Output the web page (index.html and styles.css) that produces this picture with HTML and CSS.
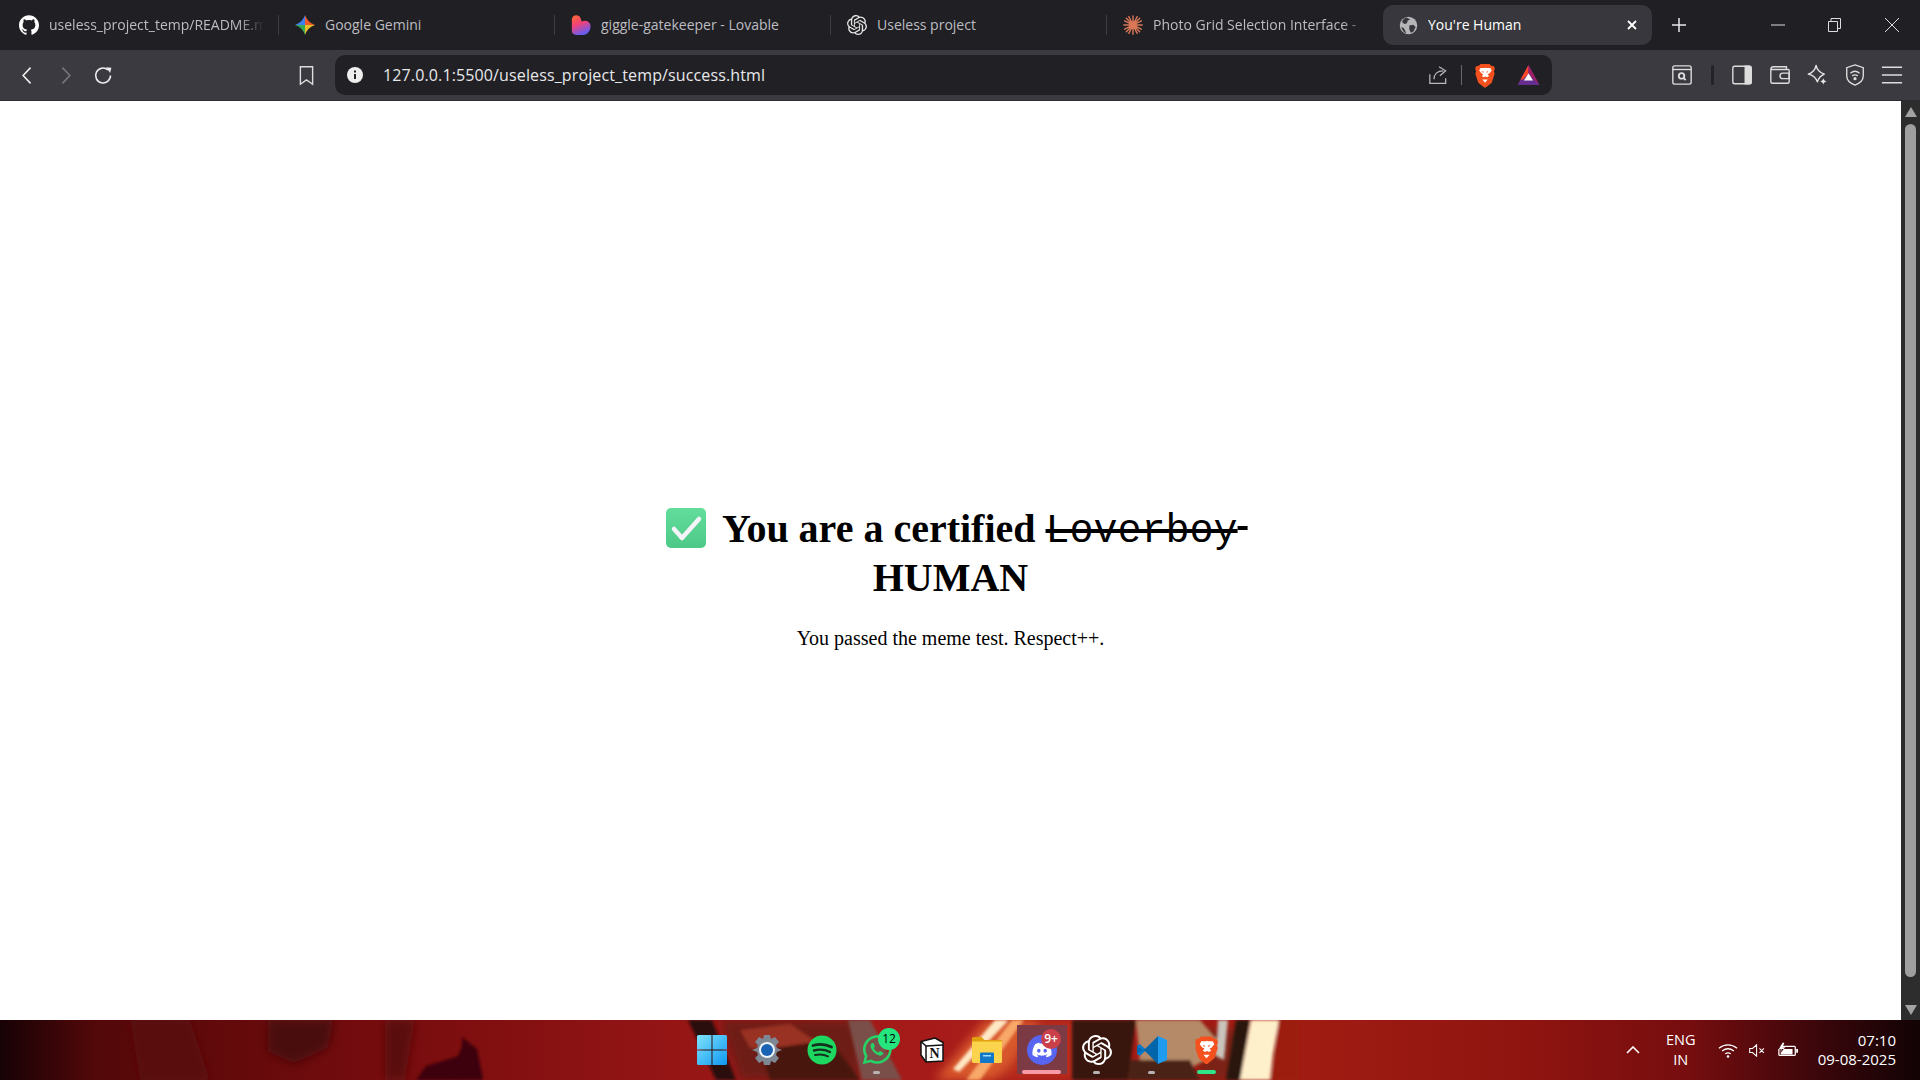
FILE: index.html
```html
<!DOCTYPE html>
<html lang="en">
<head>
  <meta charset="UTF-8">
  <meta name="viewport" content="width=device-width, initial-scale=1.0">
  <title>You're Human</title>
  <link rel="stylesheet" href="styles.css">
</head>
<body>

<svg class="svg-defs" aria-hidden="true">
  <defs>
    <linearGradient id="winBlue" x1="0" y1="0" x2="1" y2="1">
      <stop offset="0" stop-color="#7fe3fb"/>
      <stop offset="1" stop-color="#0f97f2"/>
    </linearGradient>
    <linearGradient id="heartFill" x1="0" y1="0" x2="0.4" y2="1">
      <stop offset="0" stop-color="#fb6a2c"/>
      <stop offset="0.5" stop-color="#f2427a"/>
      <stop offset="1" stop-color="#6a5cf0"/>
    </linearGradient>
    <linearGradient id="checkFill" x1="0" y1="0" x2="0" y2="1">
      <stop offset="0" stop-color="#63dd9b"/>
      <stop offset="1" stop-color="#4fc987"/>
    </linearGradient>
    <symbol id="braveLion" viewBox="0 0 24 28">
      <path fill="#f4511e" d="M7 1h10l2 2 3 .5 1 3-1 3 .8 2.500-3.300 10L13 27.500h-2l-6.500-5.500-3.300-10L2 9.500 1 6.500 2 3.500 5 3z"/>
      <path fill="#fff" d="M12 5c2 1 4 .5 6 .5l1.500 3-2.500 3-2 1 1.500 2-2 1.500-2-1-2 1-2-1.500 1.500-2-2-1-2.500-3 1.500-3c2 0 4 .5 6-.5z"/>
      <path fill="#fff" d="M9 18.500h6L12 22z"/>
      <path fill="#f4511e" d="M8 9l2.500.8-.5 1.500zM16 9l-2.500.8.5 1.500z"/>
    </symbol>
    <symbol id="openaiKnot" viewBox="0 0 24 24">
      <path d="M22.2819 9.8211a5.9847 5.9847 0 0 0-.5157-4.9108 6.0462 6.0462 0 0 0-6.5098-2.9A6.0651 6.0651 0 0 0 4.9807 4.1818a5.9847 5.9847 0 0 0-3.9977 2.9 6.0462 6.0462 0 0 0 .7427 7.0966 5.98 5.98 0 0 0 .511 4.9107 6.051 6.051 0 0 0 6.5146 2.9001A5.9847 5.9847 0 0 0 13.2599 24a6.0557 6.0557 0 0 0 5.7718-4.2058 5.9894 5.9894 0 0 0 3.9977-2.9001 6.0557 6.0557 0 0 0-.7475-7.0729zm-9.022 12.6081a4.4755 4.4755 0 0 1-2.8764-1.0408l.1419-.0804 4.7783-2.7582a.7948.7948 0 0 0 .3927-.6813v-6.7369l2.02 1.1686a.071.071 0 0 1 .038.052v5.5826a4.504 4.504 0 0 1-4.4945 4.4944zm-9.6607-4.1254a4.4708 4.4708 0 0 1-.5346-3.0137l.142.0852 4.783 2.7582a.7712.7712 0 0 0 .7806 0l5.8428-3.3685v2.3324a.0804.0804 0 0 1-.0332.0615L9.74 19.9502a4.4992 4.4992 0 0 1-6.1408-1.6464zM2.3408 7.8956a4.485 4.485 0 0 1 2.3655-1.9728V11.6a.7664.7664 0 0 0 .3879.6765l5.8144 3.3543-2.0201 1.1685a.0757.0757 0 0 1-.071 0l-4.8303-2.7865A4.504 4.504 0 0 1 2.3408 7.872zm16.5963 3.8558L13.1038 8.364 15.1192 7.2a.0757.0757 0 0 1 .071 0l4.8303 2.7913a4.4944 4.4944 0 0 1-.6765 8.1042v-5.6772a.79.79 0 0 0-.407-.667zm2.0107-3.0231l-.142-.0852-4.7735-2.7818a.7759.7759 0 0 0-.7854 0L9.409 9.2297V6.8974a.0662.0662 0 0 1 .0284-.0615l4.8303-2.7866a4.4992 4.4992 0 0 1 6.6802 4.66zM8.3065 12.863l-2.02-1.1638a.0804.0804 0 0 1-.038-.0567V6.0742a4.4992 4.4992 0 0 1 7.3757-3.4537l-.142.0805L8.704 5.459a.7948.7948 0 0 0-.3927.6813zm1.0976-2.3654l2.602-1.4998 2.6069 1.4998v2.9994l-2.5974 1.4997-2.6067-1.4997Z"/>
    </symbol>
    <filter id="soft"><feGaussianBlur stdDeviation="5"/></filter>
    <filter id="softer"><feGaussianBlur stdDeviation="1.5"/></filter>
  </defs>
</svg>

<div class="tabstrip">
  <div class="tab">
    <svg class="tab-icon" viewBox="0 0 24 24" fill="#fff"><path d="M12 .297c-6.630 0-12 5.373-12 12 0 5.303 3.438 9.800 8.205 11.385.6.113.82-.258.82-.577 0-.285-.01-1.040-.015-2.040-3.338.724-4.042-1.610-4.042-1.610C4.422 18.070 3.633 17.700 3.633 17.700c-1.087-.744.084-.729.084-.729 1.205.084 1.838 1.236 1.838 1.236 1.070 1.835 2.809 1.305 3.495.998.108-.776.417-1.305.76-1.605-2.665-.3-5.466-1.332-5.466-5.930 0-1.310.465-2.380 1.235-3.220-.135-.303-.54-1.523.105-3.176 0 0 1.005-.322 3.300 1.230.96-.267 1.980-.399 3-.405 1.020.006 2.040.138 3 .405 2.280-1.552 3.285-1.230 3.285-1.230.645 1.653.24 2.873.12 3.176.765.84 1.230 1.910 1.230 3.220 0 4.610-2.805 5.625-5.475 5.920.42.36.81 1.096.81 2.220 0 1.606-.015 2.896-.03 3.286 0 .315.21.69.825.57C20.565 22.092 24 17.592 24 12.297c0-6.627-5.373-12-12-12"/></svg>
    <span class="tab-title tab-fade">useless_project_temp/README.md</span>
  </div>
  <div class="tab">
    <svg class="tab-icon" viewBox="0 0 24 24">
      <path fill="#ee5a2a" d="M12 12V0Q15 9 24 12z"/>
      <path fill="#e6c02a" d="M12 12h12Q15 15 12 24z"/>
      <path fill="#34a853" d="M12 12v12Q9 15 0 12z"/>
      <path fill="#3f7ff0" d="M12 12H0Q9 9 12 0z"/>
    </svg>
    <span class="tab-title">Google Gemini</span>
  </div>
  <div class="tab">
    <svg class="tab-icon" viewBox="0 0 24 24"><path fill="url(#heartFill)" d="M1 5.500C1 -.5 10-1.500 11.500 4l1.500 4c3.500-2.500 10.500-.5 10.500 5.500 0 5.500-4 10.500-9 10.500H6.500C3 24 1 22 1 19z"/></svg>
    <span class="tab-title">giggle-gatekeeper - Lovable</span>
  </div>
  <div class="tab">
    <svg class="tab-icon" fill="#e6e6e6"><use href="#openaiKnot"/></svg>
    <span class="tab-title">Useless project</span>
  </div>
  <div class="tab tab-last">
    <svg class="tab-icon" viewBox="0 0 24 24" stroke="#d97757" stroke-width="1.700" stroke-linecap="round">
      <path d="M12 1v22M1 12h22M4 4l16 16M20 4L4 20M7 2l10 20M17 2L7 22M2 7l20 10M22 7L2 17"/>
      <circle cx="12" cy="12" r="4.500" fill="#d97757" stroke="none"/>
    </svg>
    <span class="tab-title tab-fade">Photo Grid Selection Interface -</span>
  </div>
  <div class="tab-active">
    <svg class="tab-icon tab-icon-globe" viewBox="0 0 24 24">
      <circle cx="12" cy="12" r="11" fill="#b5b5b8"/>
      <path fill="#37373d" d="M9 2c-2 1-5 3-5 6l3 2 3-1 1-3 3-2zM13 12l5-1 3 3-3 6-3 1-2-4zM3 14l3 1 2 4 1 3c-3-1-5-4-6-8z"/>
    </svg>
    <span class="tab-title tab-title-active">You're Human</span>
    <svg class="tab-close" viewBox="0 0 10 10" stroke="#fff" stroke-width="1.800"><path d="M1 1l8 8M9 1l-8 8"/></svg>
  </div>
  <svg class="new-tab" viewBox="0 0 14 14" stroke="#e8e8e8" stroke-width="1.500"><path d="M7 0v14M0 7h14"/></svg>
  <div class="win-controls">
    <div class="win-btn"><svg class="win-icon" viewBox="0 0 14 14" stroke="#ddd"><path d="M0 7h14"/></svg></div>
    <div class="win-btn"><svg class="win-icon" viewBox="0 0 14 14" fill="none" stroke="#ddd"><path d="M.5 3.500h9v10h-9zM3 3.500v-3h9.500v10h-3"/></svg></div>
    <div class="win-btn"><svg class="win-icon" viewBox="0 0 14 14" stroke="#ddd"><path d="M0 0l14 14M14 0L0 14"/></svg></div>
  </div>
</div>

<div class="toolbar">
  <div class="tool-btn"><svg class="tool-icon" viewBox="0 0 24 24" fill="none" stroke="#eee" stroke-width="1.800"><path d="M15.500 3L7 12l8.500 9"/></svg></div>
  <div class="tool-btn"><svg class="tool-icon" viewBox="0 0 24 24" fill="none" stroke="#77777c" stroke-width="1.800"><path d="M8.500 3L17 12l-8.500 9"/></svg></div>
  <div class="tool-btn"><svg class="tool-icon" viewBox="0 0 24 24" fill="none" stroke="#eee" stroke-width="1.800"><path d="M20 12a8.500 8.500 0 1 1-3-6.500"/><path fill="#eee" stroke="none" d="M15 2.500l6 .5-1.500 6z"/></svg></div>
  <div class="tool-btn tool-bookmark"><svg class="tool-icon" viewBox="0 0 24 24" fill="none" stroke="#ddd" stroke-width="1.600"><path d="M5 2h14v20l-7-5-7 5z"/></svg></div>

  <div class="urlbar">
    <svg class="url-info" viewBox="0 0 16 16"><circle cx="8" cy="8" r="8" fill="#eee"/><path stroke="#202025" stroke-width="2" d="M8 7v5M8 3.500v2"/></svg>
    <span class="url-text">127.0.0.1:5500/useless_project_temp/success.html</span>
    <svg class="url-share" viewBox="0 0 24 24" fill="none" stroke="#b9b9bd" stroke-width="1.500"><path d="M1 11v11h19v-6M6 17c0-6 4-10 11-10M12 2l8 5-7 6"/></svg>
    <span class="url-sep"></span>
    <svg class="url-brave"><use href="#braveLion"/></svg>
    <svg class="url-bat" viewBox="0 0 24 22">
      <path fill="#662d91" d="M12 0l12 22H0z"/>
      <path fill="#ff4724" d="M12 0v9L6 16H3.500L0 22z"/>
      <path fill="#9e1f63" d="M12 0l12 22-6-6-6-7z"/>
      <path fill="#fff" d="M12 9l5 8H7z"/>
    </svg>
  </div>

  <div class="tool-right">
    <div class="tool-btn tool-narrow"><svg class="tool-icon" viewBox="0 0 24 24" fill="none" stroke="#ddd" stroke-width="1.500"><rect x="2" y="2" width="20" height="20" rx="2"/><path d="M2 6h20"/><circle cx="11.500" cy="13" r="3" stroke-width="2"/><path d="M14 15.500l2 2" stroke-width="2"/></svg></div>
    <span class="tool-sep"></span>
    <div class="tool-btn tool-narrow"><svg class="tool-icon" viewBox="0 0 24 24" fill="none" stroke="#ddd" stroke-width="1.500"><rect x="2" y="2.500" width="20" height="19" rx="2"/><path fill="#ddd" d="M15.500 2.500H20a2 2 0 0 1 2 2v15a2 2 0 0 1-2 2h-4.500z"/></svg></div>
    <div class="tool-btn tool-narrow"><svg class="tool-icon" viewBox="0 0 24 24" fill="none" stroke="#ddd" stroke-width="1.500"><path d="M2 6a3 3 0 0 1 3-3h14v3M2 6v13a2 2 0 0 0 2 2h16a2 2 0 0 0 2-2V7a1 1 0 0 0-1-1H2z"/><path d="M22 10h-7a2 2 0 0 0 0 6h7z"/></svg></div>
    <div class="tool-btn tool-narrow"><svg class="tool-icon" viewBox="0 0 24 24" fill="none" stroke="#e6e6e6" stroke-width="1.500"><path d="M11 1.500c1 5 4 8 9 9.500-4 1.500-6 3.500-7.500 8.500-2-5.500-5-7.500-10-8.500 5-1.500 7.500-4.500 8.500-9.500z" stroke-linejoin="round"/><path fill="#e6e6e6" stroke="none" d="M19 15.500c.3 1.800 1.200 2.700 3.500 3.500-2.300.6-3.200 1.500-3.500 3.500-.5-2-1.500-3-3.500-3.500 2-.8 3-1.700 3.500-3.500z"/></svg></div>
    <div class="tool-btn tool-narrow"><svg class="tool-icon" viewBox="0 0 24 24" fill="none" stroke="#ddd" stroke-width="1.500"><path d="M12 1l9 3v9c0 4-4 8-9 10-5-2-9-6-9-10V4z"/><path d="M7 10c3-2.500 7-2.500 10 0M9 13c2-1.500 4-1.500 6 0"/><circle cx="12" cy="16" r="1" fill="#ddd"/></svg></div>
    <div class="tool-btn tool-narrow"><svg class="tool-icon" viewBox="0 0 24 24" stroke="#ddd" stroke-width="1.800"><path d="M1 3.500h22M1 12h22M1 20.500h22"/></svg></div>
  </div>
</div>

<div class="viewport">
  <main class="page">
    <h1 class="title"><svg class="check-emoji" viewBox="0 0 40 40"><rect width="40" height="40" rx="5" fill="url(#checkFill)"/><path d="M8 21l8 9L33 11" fill="none" stroke="#f6f4f8" stroke-width="4.500" stroke-linecap="round" stroke-linejoin="round"/></svg> You are a certified <s class="struck">Loverboy<span class="struck-tail">&nbsp;</span></s><br>HUMAN</h1>
    <p class="subtitle">You passed the meme test. Respect++.</p>
  </main>
  <div class="scrollbar">
    <svg class="scroll-arrow" viewBox="0 0 12 10"><path fill="#a3a3a3" d="M6 0l6 10H0z"/></svg>
    <div class="scroll-thumb"></div>
    <svg class="scroll-arrow" viewBox="0 0 12 10"><path fill="#a3a3a3" d="M6 10L0 0h12z"/></svg>
  </div>
</div>

<footer class="taskbar">
  <svg class="wallpaper" viewBox="0 0 1920 60" preserveAspectRatio="none">
    <defs>
      <linearGradient id="wallBase">
        <stop offset="0" stop-color="#170205"/>
        <stop offset="0.05" stop-color="#530809"/>
        <stop offset="0.2" stop-color="#760c0e"/>
        <stop offset="0.35" stop-color="#951515"/>
        <stop offset="0.5" stop-color="#a81c1a"/>
        <stop offset="0.68" stop-color="#a01c12"/>
        <stop offset="0.8" stop-color="#8e1410"/>
        <stop offset="0.88" stop-color="#760d0f"/>
        <stop offset="0.95" stop-color="#38060a"/>
        <stop offset="1" stop-color="#120305"/>
      </linearGradient>
    </defs>
    <rect width="1920" height="60" fill="url(#wallBase)"/>
    <g filter="url(#soft)">
      <path fill="#4a070a" d="M268 0h66l-6 28-34 16-26-12z"/>
      <path fill="#5a090b" d="M130 0h60l20 60h-70zM385 0h30l-10 60h-20z"/>
      <path fill="#6e1a12" d="M720 0h140v60H740z"/>
      <path fill="#d8562c" d="M985 0h70l-60 60h-60z"/>
      <path fill="#b82a1c" d="M1040 0h40v60h-80z"/>
      <path fill="#7b2016" d="M1200 10h50v50h-50z"/>
    </g>
    <g filter="url(#softer)">
      <path fill="#3c0608" d="M462 17l15 12 6 30-2 1h-65l10-14 20-6 12-4 4-10z"/>
      <path fill="#2c0c0c" d="M688 0h24l24 60h-20z"/>
      <path fill="#993322" d="M740 10l50-6 30 20-30 10-40-6z"/>
      <path fill="#4a1510" d="M760 30l70-10 30 40h-90z"/>
      <path fill="#7a5048" d="M848 0h22l32 60h-40z"/>
      <path fill="#ffe8c4" d="M995 0h14l-50 52-6-3z"/>
      <path fill="#f8a868" d="M1012 0h12l-44 60h-14z"/>
      <path fill="#38120e" d="M1072 0h64l-8 60h-56z"/>
      <path fill="#b58a68" d="M1136 0h64l26 30-40 20-46-8z"/>
      <path fill="#4c2418" d="M1130 40h60l10 20h-72z"/>
      <path fill="#c9c4bc" d="M1218 0h10l-4 40-8-4z"/>
      <path fill="#2a1410" d="M1236 0h14l-10 60h-14z"/>
      <path fill="#fff0cc" d="M1251 0h28l-6 34-3 26h-30z"/>
      <path fill="#9c1c10" d="M1279 0h20v60h-28l4-24z"/>
    </g>
  </svg>

  <div class="apps">
    <div class="app">
      <svg class="app-icon" viewBox="0 0 30 30" fill="url(#winBlue)"><path d="M0 1.500A1.500 1.500 0 0 1 1.500 0h13v14.500H0zM15.500 0h13A1.500 1.500 0 0 1 30 1.500v13H15.500zM0 15.500h14.500V30h-13A1.500 1.500 0 0 1 0 28.500zM15.500 15.500H30v13a1.500 1.500 0 0 1-1.500 1.500h-13z"/></svg>
    </div>
    <div class="app">
      <svg class="app-icon" viewBox="0 0 30 30">
        <path fill="#7d8894" d="M12 0h6l1 4 4-2 4 5-3 3 1 3 5 2-5 2-1 3 3 3-4 5-4-2-1 4h-6l-1-4-4 2-4-5 3-3-1-3-5-2 5-2 1-3-3-3 4-5 4 2z"/>
        <circle cx="15" cy="15" r="8" fill="#eef3f8"/><circle cx="15" cy="15" r="6" fill="#1a63b4"/>
      </svg>
    </div>
    <div class="app">
      <svg class="app-icon" viewBox="0 0 30 30"><circle cx="15" cy="15" r="14.500" fill="#1ed760"/><path fill="none" stroke="#14301f" stroke-width="2.800" stroke-linecap="round" d="M6 10.500c6-1.800 13-1.300 18.500 1.500"/><path fill="none" stroke="#14301f" stroke-width="2.400" stroke-linecap="round" d="M7 15.500c5.500-1.500 11-1 16 1.500"/><path fill="none" stroke="#14301f" stroke-width="2" stroke-linecap="round" d="M8 20c4.500-1 9-.7 13 1.300"/></svg>
    </div>
    <div class="app">
      <svg class="app-icon" viewBox="0 0 30 30">
        <path fill="none" stroke="#25d366" stroke-width="2.600" d="M2.500 27.500l1.600-6.500A13 13 0 1 1 9 25.800z"/>
        <path fill="#25d366" d="M10 8c-1.500 1-2 3-1 5 1.500 3.500 4 6 8 7.500 2 .5 4-.5 4.500-2.500l-3.500-2-1.800 1.500c-2-1-3.500-2.500-4.500-4.500L13 11.500 11.500 8z"/>
      </svg>
      <span class="badge badge-green">12</span>
      <span class="run-dot"></span>
    </div>
    <div class="app">
      <svg class="app-icon app-notion" viewBox="0 0 24 26">
        <path fill="#fff" stroke="#111" stroke-width="1.500" stroke-linejoin="round" d="M1 4.500L15 1l8 4.500V24L6 25 1 18z"/>
        <path fill="none" stroke="#111" stroke-width="1.500" d="M1 4.500l5 4.500 17-1"/>
        <path fill="none" stroke="#111" stroke-width="1.500" d="M6 9v16"/>
        <text class="notion-n" x="14.500" y="21" text-anchor="middle">N</text>
      </svg>
    </div>
    <div class="app">
      <svg class="app-icon" viewBox="0 0 30 26">
        <path fill="#e0a10f" d="M0 1.500A1.500 1.500 0 0 1 1.500 0h8l3 3h17.500v6H0z"/>
        <path fill="#fcd34d" d="M0 4.500h30V24.500a1.500 1.500 0 0 1-1.500 1.500h-27A1.500 1.500 0 0 1 0 24.500z"/>
        <path fill="#0f78c8" d="M9 15.500h12a1 1 0 0 1 1 1V26H8v-9.500a1 1 0 0 1 1-1z"/>
        <path fill="#9cdcfb" d="M11 18h8v1.500h-8z"/>
      </svg>
    </div>
    <div class="app app-open">
      <svg class="app-icon" viewBox="0 0 30 30">
        <circle cx="15" cy="15" r="15" fill="#5865f2"/>
        <g transform="translate(5.400 5.400) scale(.8)"><path fill="#fff" d="M20.317 4.3698a19.7913 19.7913 0 00-4.8851-1.5152.0741.0741 0 00-.0785.0371c-.211.3753-.4447.8648-.6083 1.2495-1.8447-.2762-3.68-.2762-5.4868 0-.1636-.3933-.4058-.8742-.6177-1.2495a.077.077 0 00-.0785-.037 19.7363 19.7363 0 00-4.8852 1.515.0699.0699 0 00-.0321.0277C.5334 9.0458-.319 13.5799.0992 18.0578a.0824.0824 0 00.0312.0561c2.0528 1.5076 4.0413 2.4228 5.9929 3.0294a.0777.0777 0 00.0842-.0276c.4616-.6304.8731-1.2952 1.226-1.9942a.076.076 0 00-.0416-.1057c-.6528-.2476-1.2743-.5495-1.8722-.8923a.077.077 0 01-.0076-.1277c.1258-.0943.2517-.1923.3718-.2914a.0743.0743 0 01.0776-.0105c3.9278 1.7933 8.18 1.7933 12.0614 0a.0739.0739 0 01.0785.0095c.1202.099.246.1981.3728.2924a.077.077 0 01-.0066.1276 12.2986 12.2986 0 01-1.873.8914.0766.0766 0 00-.0407.1067c.3604.698.7719 1.3628 1.225 1.9932a.076.076 0 00.0842.0286c1.961-.6067 3.9495-1.5219 6.0023-3.0294a.077.077 0 00.0313-.0552c.5004-5.177-.8382-9.6739-3.5485-13.6604a.061.061 0 00-.0312-.0286zM8.02 15.3312c-1.1825 0-2.1569-1.0857-2.1569-2.419 0-1.3332.9555-2.4189 2.157-2.4189 1.2108 0 2.1757 1.0952 2.1568 2.419 0 1.3332-.9555 2.4189-2.1569 2.4189zm7.9748 0c-1.1825 0-2.1569-1.0857-2.1569-2.419 0-1.3332.9554-2.4189 2.1569-2.4189 1.2108 0 2.1757 1.0952 2.1568 2.419 0 1.3332-.946 2.4189-2.1568 2.4189Z"/></g>
      </svg>
      <span class="badge badge-red">9+</span>
      <span class="run-bar run-bar-pink"></span>
    </div>
    <div class="app">
      <svg class="app-icon" fill="#fff"><use href="#openaiKnot"/></svg>
      <span class="run-dot"></span>
    </div>
    <div class="app">
      <svg class="app-icon" viewBox="0 0 30 30">
        <path fill="#0065a9" d="M21 1L8 14 3 9.500 0 11v8l3 1.500 5-4.500 13 13z"/>
        <path fill="#007acc" d="M22 7.500L12 15l10 7.500zM0 11l3-1.500L8 14l-2.500 1zM0 19l3 1.500L8 16l-2.500-1z"/>
        <path fill="#1f9cf0" d="M21 1l9 4v20l-9 4z"/>
        <path fill="#0065a9" d="M21 8v14l-9-7z"/>
      </svg>
      <span class="run-dot"></span>
    </div>
    <div class="app">
      <svg class="app-icon app-brave"><use href="#braveLion"/></svg>
      <span class="run-bar run-bar-green"></span>
    </div>
  </div>

  <div class="tray">
    <svg class="tray-caret" viewBox="0 0 14 8" fill="none" stroke="#fff" stroke-width="1.600"><path d="M1 7l6-6 6 6"/></svg>
    <div class="tray-lang">ENG<br>IN</div>
    <svg class="tray-wifi" viewBox="0 0 22 16" fill="none" stroke="#fff" stroke-width="1.400"><path d="M1 5.500c6-5 14-5 20 0M4.500 8.500c4-3 9-3 13 0M8 11.500c2-1.300 4-1.300 6 0"/><circle cx="11" cy="14.500" r="1.400" fill="#fff" stroke="none"/></svg>
    <svg class="tray-mute" viewBox="0 0 20 16" fill="none" stroke="#fff" stroke-width="1.300"><path d="M1 5.500h3.500L9.500 1v14l-5-4.500H1zM13 5.500l5.500 5.500M18.500 5.500L13 11"/></svg>
    <svg class="tray-battery" viewBox="0 0 22 16"><path fill="none" stroke="#fff" stroke-width="1.400" d="M3 4h15a1 1 0 0 1 1 1v8a1 1 0 0 1-1 1H2a1 1 0 0 1-1-1V7"/><path fill="#fff" d="M3 7h13v6H3zM20 7h2v4h-2zM5 0L1 7h3L3 11l5-6H5l2-5z"/></svg>
    <div class="tray-clock">07:10<br>09-08-2025</div>
  </div>
</footer>

</body>
</html>
```

FILE: styles.css
```css
* {
  box-sizing: border-box;
}
html, body {
  height: 100%;
}
body {
  margin: 0;
  display: flex;
  flex-direction: column;
  overflow: hidden;
  font-family: "Open Sans", "Noto Sans", sans-serif;
  background: #fff;
}
svg {
  display: block;
  flex-shrink: 0;
}
.svg-defs {
  position: absolute;
  width: 0;
  height: 0;
}

/* tabs */
.tabstrip {
  height: 50px;
  background: #1f1f24;
  display: flex;
  align-items: center;
  padding-left: 3px;
}
.tab {
  width: 276px;
  height: 40px;
  display: flex;
  align-items: center;
  gap: 10px;
  padding: 0 15px 0 16px;
  position: relative;
}
.tab::after {
  content: "";
  position: absolute;
  right: 0;
  top: 10px;
  height: 20px;
  border-right: 1px solid #3c3c42;
}
.tab-last::after {
  display: none;
}
.tab-icon {
  width: 20px;
  height: 20px;
}
.tab-icon-globe {
  width: 19px;
  height: 19px;
}
.tab-title {
  flex: 1;
  min-width: 0;
  margin-bottom: 2px;
  font-size: 14px;
  color: #bdbdc1;
  white-space: nowrap;
  overflow: hidden;
}
.tab-fade {
  mask-image: linear-gradient(to right, #000 88%, transparent);
}
.tab-title-active {
  color: #fff;
}
.tab-active {
  width: 269px;
  height: 40px;
  background: #37373d;
  border-radius: 10px;
  display: flex;
  align-items: center;
  gap: 10px;
  padding: 0 15px 0 16px;
}
.tab-close {
  width: 10px;
  height: 10px;
}
.new-tab {
  width: 14px;
  height: 14px;
  margin-left: 20px;
}
.win-controls {
  margin-left: auto;
  display: flex;
}
.win-btn {
  width: 57px;
  height: 40px;
  display: flex;
  align-items: center;
  justify-content: center;
}
.win-icon {
  width: 14px;
  height: 14px;
}

/* toolbar */
.toolbar {
  height: 51px;
  background: #3a3a40;
  display: flex;
  align-items: center;
  padding: 0 9px 0 8px;
  border-bottom: 1px solid #2c2c30;
}
.tool-btn {
  width: 38px;
  height: 38px;
  display: flex;
  align-items: center;
  justify-content: center;
}
.tool-narrow {
  width: 37.5px;
}
.tool-bookmark {
  margin-left: 165px;
}
.tool-icon {
  width: 21px;
  height: 21px;
}
.tool-right .tool-icon {
  width: 22px;
  height: 22px;
}
.urlbar {
  width: 1217px;
  height: 40px;
  margin-left: 10px;
  background: #202025;
  border-radius: 10px;
  display: flex;
  align-items: center;
  padding: 0 12px 0 12px;
}
.url-info {
  width: 16px;
  height: 16px;
}
.url-text {
  flex: 1;
  margin-left: 20px;
  font-size: 16px;
  letter-spacing: .13px;
  color: #e8e8ea;
}
.url-share {
  width: 20px;
  height: 20px;
}
.url-sep {
  width: 1px;
  height: 20px;
  background: #66666b;
  margin: 0 12px;
}
.url-brave {
  width: 22px;
  height: 25px;
}
.url-bat {
  width: 23px;
  height: 20px;
  margin-left: 21px;
}
.tool-right {
  margin-left: auto;
  display: flex;
  align-items: center;
}
.tool-sep {
  width: 3px;
  height: 20px;
  background: #232327;
  border-radius: 2px;
  margin: 0 10px;
}

/* page */
.viewport {
  flex: 1;
  min-height: 0;
  display: flex;
}
.page {
  flex: 1;
  display: flex;
  flex-direction: column;
  align-items: center;
  justify-content: center;
  padding-top: 34px;
  font-family: "Liberation Serif", serif;
  color: #000;
  text-align: center;
}
.title {
  max-width: 700px;
  margin: 0 0 26px;
  font-size: 40px;
  font-weight: bold;
}
.check-emoji {
  display: inline-block;
  width: 40px;
  height: 40px;
  margin: 0 7px 0 13px;
  vertical-align: -6px;
}
.struck {
  font-family: "Liberation Mono", monospace;
  font-weight: normal;
}
.struck-tail {
  font-family: "Liberation Serif", serif;
  font-weight: bold;
}
.subtitle {
  margin: 0;
  font-size: 20px;
}
.scrollbar {
  width: 19px;
  background: #2d2d2d;
  display: flex;
  flex-direction: column;
  align-items: center;
  padding: 6px 0 5px;
}
.scroll-arrow {
  width: 12px;
  height: 10px;
}
.scroll-thumb {
  width: 11px;
  height: 853px;
  margin: 7px 0 auto;
  background: #9f9f9f;
  border-radius: 6px;
}

/* taskbar */
.taskbar {
  height: 60px;
  position: relative;
  display: grid;
  grid-template-columns: 684px 550px 1fr;
  overflow: hidden;
}
.wallpaper {
  position: absolute;
  left: 0;
  top: 0;
  width: 100%;
  height: 100%;
}
.apps {
  grid-column: 2;
  display: flex;
  position: relative;
}
.app {
  width: 55px;
  height: 60px;
  position: relative;
  display: flex;
  align-items: center;
  justify-content: center;
}
.app-icon {
  width: 30px;
  height: 30px;
}
.app-notion {
  width: 24px;
  height: 26px;
}
.notion-n {
  font-family: "Liberation Serif", serif;
  font-size: 14px;
  font-weight: bold;
  fill: #111;
}
.app-brave {
  width: 25px;
  height: 30px;
}
.app-open {
  background: #7b3a44;
  background-clip: content-box;
  padding: 5px 2.5px 6px;
}
.badge {
  position: absolute;
  top: 8px;
  left: 29px;
  min-width: 22px;
  height: 22px;
  border-radius: 11px;
  font-size: 12px;
  line-height: 22px;
  text-align: center;
}
.badge-green {
  background: #25e67e;
  color: #000;
}
.badge-red {
  background: #c9404a;
  color: #fff;
  top: 9px;
  left: 27px;
  min-width: 20px;
  height: 20px;
  line-height: 20px;
  font-weight: 600;
}
.run-dot {
  position: absolute;
  bottom: 6px;
  left: 24px;
  width: 7px;
  height: 3px;
  border-radius: 2px;
  background: #b9b4b4;
}
.run-bar {
  position: absolute;
  bottom: 6px;
  left: 8px;
  width: 39px;
  height: 4px;
  border-radius: 2px;
}
.run-bar-pink {
  background: #f79aa6;
}
.run-bar-green {
  left: 18px;
  width: 19px;
  background: #2ee58a;
}
.tray {
  grid-column: 3;
  position: relative;
  display: flex;
  align-items: center;
  justify-content: flex-end;
  padding-right: 24px;
  color: #fff;
  font-size: 15px;
}
.tray-caret {
  width: 14px;
  height: 8px;
}
.tray-lang {
  width: 40px;
  margin-left: 21px;
  font-size: 14.5px;
  text-align: center;
  line-height: 20px;
}
.tray-wifi {
  width: 20px;
  height: 15px;
  margin-left: 17px;
}
.tray-mute {
  width: 20px;
  height: 13px;
  margin-left: 9px;
}
.tray-battery {
  width: 20px;
  height: 16px;
  margin-left: 11px;
}
.tray-clock {
  margin-left: 20px;
  text-align: right;
  line-height: 19px;
}
```
